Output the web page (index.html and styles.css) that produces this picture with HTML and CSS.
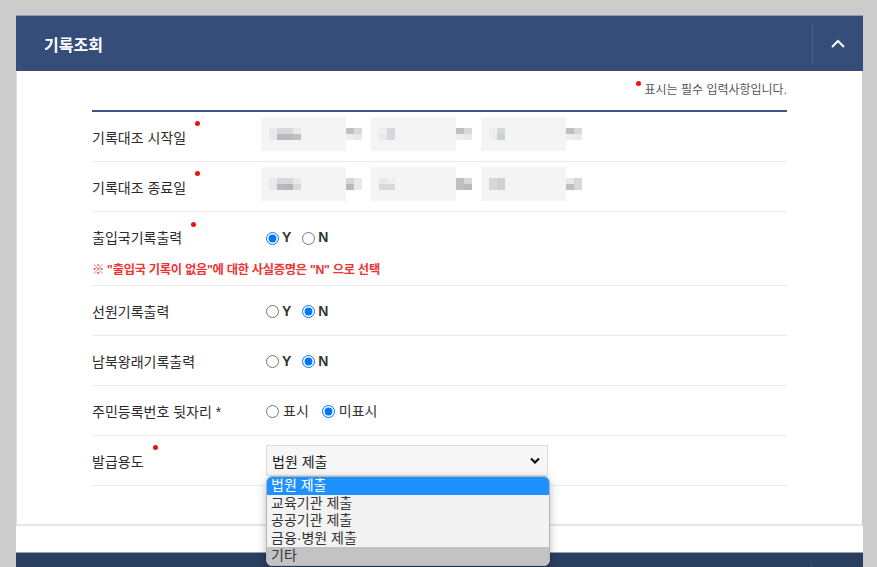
FILE: index.html
```html
<!DOCTYPE html>
<html lang="ko">
<head>
  <meta charset="UTF-8">
  <meta name="viewport" content="width=device-width, initial-scale=1.0">
  <title>기록조회</title>
  <link rel="stylesheet" href="styles.css">
</head>
<body>

  <div class="wrap">

    <section class="panel">
      <div class="panel-head">
        <h2>기록조회</h2>
        <button class="toggle" type="button">
          <svg width="14" height="9" viewBox="0 0 14 9"><polyline points="1,8 7,2 13,8" fill="none" stroke="#fff" stroke-width="2"/></svg>
        </button>
      </div>

      <div class="panel-body">
        <p class="req-note"><span class="req"></span>표시는 필수 입력사항입니다.</p>

        <div class="form">

          <!-- 기간 (블러 처리된 값) -->
          <div class="row">
            <div class="label">기록대조 시작일<span class="req"></span></div>
            <div class="dates">
              <div class="dgroup">
                <div class="dbox"><div class="mos w4"><i class="c1"></i><i class="c2"></i><i class="c2"></i><i class="c1"></i><i class="c1"></i><i class="c3"></i><i class="c3"></i><i class="c4"></i></div></div>
                <div class="mos w2 unit"><i class="c4"></i><i class="c2"></i><i class="c5"></i><i class="c1"></i></div>
              </div>
              <div class="dgroup">
                <div class="dbox"><div class="mos w2"><i class="c5"></i><i class="c2"></i><i class="c1"></i><i class="c2"></i></div></div>
                <div class="mos w2 unit"><i class="c4"></i><i class="c2"></i><i class="c5"></i><i class="c1"></i></div>
              </div>
              <div class="dgroup">
                <div class="dbox"><div class="mos w2"><i class="c5"></i><i class="c2"></i><i class="c5"></i><i class="c6"></i></div></div>
                <div class="mos w2 unit"><i class="c4"></i><i class="c2"></i><i class="c5"></i><i class="c1"></i></div>
              </div>
            </div>
          </div>

          <div class="row">
            <div class="label">기록대조 종료일<span class="req"></span></div>
            <div class="dates">
              <div class="dgroup">
                <div class="dbox"><div class="mos w4"><i class="c1"></i><i class="c2"></i><i class="c2"></i><i class="c1"></i><i class="c1"></i><i class="c3"></i><i class="c7"></i><i class="c2"></i></div></div>
                <div class="mos w2 unit"><i class="c2"></i><i class="c1"></i><i class="c3"></i><i class="c1"></i></div>
              </div>
              <div class="dgroup">
                <div class="dbox"><div class="mos w2"><i class="c1"></i><i class="c5"></i><i class="c2"></i><i class="c2"></i></div></div>
                <div class="mos w2 unit"><i class="c4"></i><i class="c2"></i><i class="c4"></i><i class="c3"></i></div>
              </div>
              <div class="dgroup">
                <div class="dbox"><div class="mos w2"><i class="c2"></i><i class="c6"></i><i class="c2"></i><i class="c6"></i></div></div>
                <div class="mos w2 unit"><i class="c1"></i><i class="c2"></i><i class="c4"></i><i class="c2"></i></div>
              </div>
            </div>
          </div>

          <!-- 출력 여부 -->
          <div class="row has-note">
            <div class="row-main">
              <div class="label">출입국기록출력<span class="req"></span></div>
              <div class="opts">
                <label class="opt"><input type="radio" name="immi" checked>Y</label>
                <label class="opt"><input type="radio" name="immi">N</label>
              </div>
            </div>
            <p class="notice">※ "출입국 기록이 없음"에 대한 사실증명은 "N" 으로 선택</p>
          </div>

          <div class="row">
            <div class="label">선원기록출력</div>
            <div class="opts">
              <label class="opt"><input type="radio" name="crew">Y</label>
              <label class="opt"><input type="radio" name="crew" checked>N</label>
            </div>
          </div>

          <div class="row">
            <div class="label">남북왕래기록출력</div>
            <div class="opts">
              <label class="opt"><input type="radio" name="nk">Y</label>
              <label class="opt"><input type="radio" name="nk" checked>N</label>
            </div>
          </div>

          <div class="row">
            <div class="label">주민등록번호 뒷자리 *</div>
            <div class="opts">
              <label class="opt wide"><input type="radio" name="rrn">표시</label>
              <label class="opt wide"><input type="radio" name="rrn" checked>미표시</label>
            </div>
          </div>

          <!-- 발급용도 : 목록이 열린 상태 -->
          <div class="row">
            <div class="label">발급용도<span class="req"></span></div>
            <div class="select">
              <span>법원 제출</span>
              <svg width="10" height="7" viewBox="0 0 10 7"><polyline points="1,1.5 5,5.5 9,1.5" fill="none" stroke="#111" stroke-width="2.2"/></svg>
              <ul class="options">
                <li class="on">법원 제출</li>
                <li>교육기관 제출</li>
                <li>공공기관 제출</li>
                <li>금융·병원 제출</li>
                <li class="hover">기타</li>
              </ul>
            </div>
          </div>

        </div>
      </div>
    </section>

    <section class="panel closed">
      <div class="panel-head">
        <h2></h2>
        <span class="toggle"></span>
      </div>
    </section>

  </div>

</body>
</html>
```

FILE: styles.css
```css
body {
  margin: 0;
  background-color: #cccccc;
  font-family: "Liberation Sans", "Noto Sans CJK KR", sans-serif;
  color: #333;
  height: 567px;
  overflow: hidden;
}

.wrap {
  margin: 15px 0 0 16px;
  width: 847px;
  height: 552px;
  background-color: #fff;
}

/* 패널 헤더 */
.panel-head {
  height: 56px;
  box-sizing: border-box;
  background-color: #344d79;
  border-top: 1px solid #8e9ab0;
  display: flex;
  align-items: center;
  justify-content: space-between;
}

.panel-head h2 {
  margin: 0;
  padding-left: 28px;
  color: #fff;
  font-size: 16px;
  font-weight: bold;
}

.toggle {
  width: 51px;
  height: 38px;
  padding: 0;
  background: none;
  border: 0;
  border-left: 1px solid #4a6290;
  display: flex;
  align-items: center;
  justify-content: center;
}

.panel {
  margin-bottom: 26px;
}

.panel.closed {
  margin-bottom: 0;
  height: 16px;
  overflow: hidden;
}

.panel.closed .panel-head {
  background-color: #2a3e60;
  border-top-color: #9aa3b3;
}

.panel.closed .toggle {
  border-left-color: #3c5279;
}

/* 패널 본문 */
.panel-body {
  border-left: 1px solid #dddddd;
  border-right: 1px solid #c9c9c9;
  border-bottom: 2px solid #e6e6e6;
  padding: 10px 75px 38px;
}

.req-note {
  margin: 0 0 11px;
  text-align: right;
  font-size: 12px;
  line-height: 18px;
  color: #555;
}

.req {
  display: inline-block;
  width: 5px;
  height: 5px;
  border-radius: 50%;
  background-color: #ee1111;
  vertical-align: middle;
  position: relative;
}

.req-note .req {
  margin-right: 4px;
  top: -7px;
}

.label .req {
  margin-left: 9px;
  top: -15px;
}

.form {
  border-top: 2px solid #3b5584;
}

.row {
  height: 50px;
  box-sizing: border-box;
  display: flex;
  align-items: center;
  border-bottom: 1px solid #ebebeb;
}

.row.has-note {
  height: 74px;
  flex-direction: column;
  align-items: stretch;
}

.row-main {
  height: 50px;
  display: flex;
  align-items: center;
}

.notice {
  margin: 0;
  font-size: 12.3px;
  font-weight: bold;
  line-height: 16px;
  color: #ee3333;
  letter-spacing: -0.3px;
}

.label {
  width: 174px;
  flex-shrink: 0;
  font-size: 14px;
  line-height: 20px;
  padding-top: 2px;
  color: #2b2b2b;
}

/* 블러 처리된 날짜 */
.dates {
  display: flex;
  margin-left: -5px;
  margin-top: -5px;
}

.dgroup {
  display: flex;
  align-items: center;
  margin-right: 9px;
}

.dbox {
  width: 85px;
  height: 34px;
  box-sizing: border-box;
  padding-left: 8px;
  background-color: #f4f4f4;
  display: flex;
  align-items: center;
}

.mos {
  display: grid;
  grid-auto-rows: 6px;
  filter: blur(0.6px);
}

.mos.w4 { grid-template-columns: repeat(4, 8px); }
.mos.w2 { grid-template-columns: repeat(2, 8px); }

.mos i { display: block; }
.c1 { background-color: #e9e9e9; }
.c2 { background-color: #d6d8db; }
.c3 { background-color: #b6bac1; }
.c4 { background-color: #c4bfbb; }
.c5 { background-color: #eeeeef; }
.c6 { background-color: #ccd1cf; }
.c7 { background-color: #b9b3b9; }

/* 라디오 */
.opts {
  display: flex;
  align-items: center;
}

.opt {
  display: inline-flex;
  align-items: center;
  font-size: 14px;
  font-weight: bold;
  margin-right: 11px;
  line-height: 16px;
}

.opt.wide {
  margin-right: 13px;
  font-weight: normal;
}

.opt input {
  width: 13px;
  height: 13px;
  margin: 2px 3px 0 0;
}

.opt.wide input {
  margin-right: 4px;
}

/* 선택 상자 */
.select {
  position: relative;
  width: 282px;
  height: 31px;
  box-sizing: border-box;
  border: 1px solid #dcdcdc;
  background-color: #f7f7f7;
  padding: 0 7px 0 5px;
  display: flex;
  align-items: center;
  justify-content: space-between;
  font-size: 14px;
  color: #222;
}

.options {
  position: absolute;
  left: -1px;
  top: 30px;
  width: 282px;
  margin: 0;
  padding: 0;
  list-style: none;
  background-color: #f3f3f3;
  border: 1px solid #b5b5b5;
  border-radius: 6px;
  box-shadow: 0 3px 10px rgba(0, 0, 0, 0.25);
  overflow: hidden;
  z-index: 5;
}

.options li {
  height: 17.6px;
  line-height: 17.6px;
  padding-left: 4px;
  font-size: 14px;
  color: #333;
}

.options li.on {
  background-color: #1e90ff;
  color: #fff;
}

.options li.hover {
  background-color: #c3c3c3;
}
```
